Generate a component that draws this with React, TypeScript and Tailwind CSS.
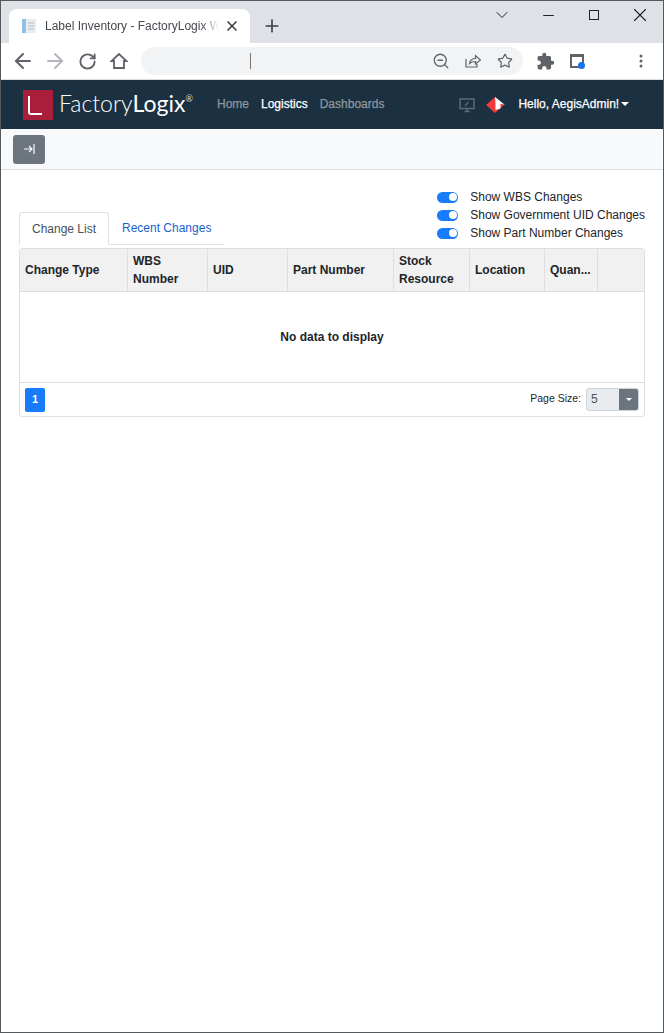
import { ArrowLeft, ArrowRight, RotateCw, ZoomOut, Star, ChevronDown, Minus, X, Plus } from "lucide-react";
import { MdExtension } from "react-icons/md";

const columns = [
    { label: "Change Type", width: "w-[108px]" },
    { label: "WBS Number", width: "w-[80px]" },
    { label: "UID", width: "w-[80px]" },
    { label: "Part Number", width: "w-[106px]" },
    { label: "Stock Resource", width: "w-[76px]" },
    { label: "Location", width: "w-[75px]" },
    { label: "Quan...", width: "w-[53px]" },
];

const toggles = ["Show WBS Changes", "Show Government UID Changes", "Show Part Number Changes"];

const BrowserChrome = () => (
    <div>
        {/* tab strip */}
        <div className="h-[42px] bg-[#dee1e6] flex items-end pl-[8px]">
            <div className="h-[34px] w-[241px] bg-white rounded-t-lg flex items-center pl-[12px] text-[#45494e] text-[12px]">
                <svg width="16" height="16" viewBox="0 0 16 16" className="shrink-0">
                    <rect x="1" y="1" width="14" height="14" fill="#e8edf2" />
                    <rect x="1" y="1" width="4" height="14" fill="#8fc0e8" />
                    <path d="M7 5h6M7 8h6M7 11h6" stroke="#b5bcc4" />
                </svg>
                <span className="ml-[8px] w-[174px] whitespace-nowrap [mask-image:linear-gradient(to_right,black_90%,transparent)]">Label Inventory - FactoryLogix W</span>
                <X size={16} strokeWidth={2.5} className="ml-[5px] text-[#3c4043]" />
            </div>
            <Plus size={20} strokeWidth={2} className="ml-[12px] mb-[7px] text-[#3c4043]" />
            <div className="ml-auto flex items-center h-[28px] self-start text-[#202124]">
                <div className="w-[46px] flex justify-center"><ChevronDown size={20} strokeWidth={1.2} /></div>
                <div className="w-[46px] flex justify-center"><Minus size={17} strokeWidth={1.4} /></div>
                <div className="w-[46px] flex justify-center"><div className="w-[10px] h-[10px] border border-[#202124]" /></div>
                <div className="w-[46px] flex justify-center"><X size={22} strokeWidth={1.2} /></div>
            </div>
        </div>
        {/* toolbar */}
        <div className="h-[37px] bg-white border-b border-[#dadce0] flex items-center text-[#5f6368] pl-[6px]">
            <div className="w-[32px] flex justify-center"><ArrowLeft size={24} strokeWidth={2} /></div>
            <div className="w-[32px] flex justify-center"><ArrowRight size={24} strokeWidth={2} className="text-[#b4b7bb]" /></div>
            <div className="w-[32px] flex justify-center"><RotateCw size={19} strokeWidth={2.4} /></div>
            <div className="w-[32px] flex justify-center">
                <svg width="18" height="18" viewBox="0 0 18 18" fill="none" stroke="currentColor" strokeWidth="1.800">
                    <path d="M9 2 1.500 9H4v7h10V9h2.500z" />
                </svg>
            </div>
            <div className="ml-[6px] w-[382px] h-[28px] rounded-full bg-[#f1f3f4] flex items-center pr-[2px]">
                <div className="ml-[109px] w-px h-[16px] bg-[#777]" />
                <div className="ml-auto w-[32px] flex justify-center"><ZoomOut size={18} strokeWidth={1.7} /></div>
                <div className="w-[32px] flex justify-center">
                    <svg width="16" height="14" viewBox="0 0 16 14" fill="none" stroke="currentColor" strokeWidth="1.200">
                        <path d="M1 5v8h11v-3" />
                        <path d="M4.500 9.500C5 6.500 7.500 4.500 10.500 4.500V1.500l5 4.500-5 4V7.500c-2.500 0-4.500.5-6 2z" />
                    </svg>
                </div>
                <div className="w-[32px] flex justify-center"><Star size={16} strokeWidth={1.8} /></div>
            </div>
            <div className="ml-[6px] w-[32px] flex justify-center"><MdExtension size={19} /></div>
            <div className="w-[32px] flex justify-center">
                <div className="w-[14px] h-[14px] border-2 border-t-[3px] border-[#5f6368] relative">
                    <div className="absolute -right-[3px] -bottom-[3px] w-[7px] h-[7px] rounded-full bg-[#1a73e8]" />
                </div>
            </div>
            <div className="ml-[32px] w-[32px] flex justify-center">
                <svg width="4" height="14" viewBox="0 0 4 14" fill="currentColor">
                    <circle cx="2" cy="2" r="1.500" />
                    <circle cx="2" cy="7" r="1.500" />
                    <circle cx="2" cy="12" r="1.500" />
                </svg>
            </div>
        </div>
    </div>
);

const AppHeader = () => (
    <div className="h-[49px] bg-[#1b3040] flex items-center pl-[22px]">
        <div className="w-[30px] h-[30px] bg-[#a91e3b] relative shrink-0">
            <div className="absolute left-[5px] top-[6px] w-[14px] h-[19px] border-l-2 border-b-2 border-white rounded-bl-[3px]" />
        </div>
        <div className="ml-[6px] w-[134px] text-[23px] text-white font-['Lato',sans-serif] font-light leading-none flex -mt-[2px]">
            <span>Factory</span>
            <span className="font-normal">Logix</span>
            <span className="text-[9px] font-normal mt-[2px] text-[#d5d9dc]">®</span>
        </div>
        <nav className="ml-[24px] flex gap-[12px] text-[12px] [-webkit-text-stroke:0.25px] -mt-[2px]">
            <span className="text-[#8d979f]">Home</span>
            <span className="text-white">Logistics</span>
            <span className="text-[#8d979f]">Dashboards</span>
        </nav>
        <svg width="16" height="16" viewBox="0 0 16 16" fill="none" stroke="#5d6a75" className="ml-[75px]">
            <rect x="1" y="2" width="14" height="9.500" strokeWidth="1.500" />
            <path d="M5.500 14.500h5M8 11.500v3" strokeWidth="1.500" />
            <path d="M6 9l3.500-4" strokeWidth="1.300" />
        </svg>
        <svg width="20" height="18" viewBox="0 0 20 18" className="ml-[11px]">
            <path d="M0 9 9 1 18 9 9 17z" fill="#ef3b3b" />
            <path d="M9 1 19 9 14.500 7.500V12.500L9.500 14V7z" fill="#ffffff" />
        </svg>
        <span className="ml-[12px] text-[12px] text-white whitespace-nowrap [-webkit-text-stroke:0.25px] -mt-[2px]">Hello, AegisAdmin!</span>
        <span className="ml-[2px] -mt-[2px] border-x-[4px] border-x-transparent border-t-[4px] border-t-white" />
    </div>
);

const Toggle = ({ label }: { label: string }) => (
    <div className="h-[18px] flex items-center">
        <div className="w-[21px] h-[11px] rounded-full bg-[#187bfb] relative">
            <div className="absolute right-[1px] top-[1.500px] w-[8px] h-[8px] rounded-full bg-white" />
        </div>
        <span className="ml-[12px] text-[12px] text-[#212529] whitespace-nowrap">{label}</span>
    </div>
);

const App = () => {
    return (
        <div className="w-[664px] h-[1033px] bg-white border border-[#55595c] overflow-hidden font-['Liberation_Sans',sans-serif]">
            <BrowserChrome />
            <AppHeader />
            <div className="h-[41px] bg-[#f8f9fa] border-b border-[#dcdfe2] pl-[12px] pt-[6px]">
                <button className="w-[32px] h-[29px] rounded-[3px] bg-[#6c757d] flex items-center justify-center">
                    <svg width="12" height="12" viewBox="0 0 12 12" fill="none" stroke="white" strokeWidth="1.200" className="-mt-[2px]">
                        <path d="M1 6h8M6 3l3 3-3 3" />
                        <path d="M11 1v10" />
                    </svg>
                </button>
            </div>
            <div className="px-[18px] pt-[18px]">
                <div className="flex justify-between items-end">
                    <div className="w-[205px] h-[33px] border-b border-[#dee2e6] flex text-[12px]">
                        <div className="w-[90px] h-[33px] border border-[#dee2e6] border-b-white rounded-t-[3px] bg-white flex items-center justify-center text-[#495057]">
                            Change List
                        </div>
                        <div className="ml-[13px] h-[32px] flex items-center text-[#1a5fd0]">Recent Changes</div>
                    </div>
                    <div className="mb-[3px]">
                        {toggles.map((t) => (
                            <Toggle key={t} label={t} />
                        ))}
                    </div>
                </div>
                <div className="mt-[3px] w-[626px] border border-[#dfdfdf] rounded-[3px] text-[12px] text-[#212529]">
                    <div className="flex h-[43px] bg-[#f1f1f1] border-b border-[#dfdfdf] font-bold leading-[18px]">
                        {columns.map((c) => (
                            <div key={c.label} className={`${c.width} border-r border-[#dfdfdf] px-[5px] flex items-center`}>
                                {c.label}
                            </div>
                        ))}
                    </div>
                    <div className="h-[91px] flex items-center justify-center font-bold border-b border-[#dfdfdf]">
                        No data to display
                    </div>
                    <div className="h-[33px] flex items-center px-[5px]">
                        <div className="w-[20px] h-[24px] rounded-[2px] bg-[#187bfb] text-white text-[11px] font-bold flex items-center justify-center">1</div>
                        <span className="ml-auto -mt-[2px] text-[10.500px]">Page Size:</span>
                        <div className="ml-[5px] -mt-[1px] w-[53px] h-[23px] rounded-[3px] bg-[#e9ecef] border border-[#ced4da] flex items-center overflow-hidden">
                            <span className="ml-[4px] text-[#495057]">5</span>
                            <div className="ml-auto w-[19px] h-full bg-[#6c757d] flex items-center justify-center">
                                <span className="border-x-[3px] border-x-transparent border-t-[3px] border-t-white" />
                            </div>
                        </div>
                    </div>
                </div>
            </div>
        </div>
    );
};

export default App;
